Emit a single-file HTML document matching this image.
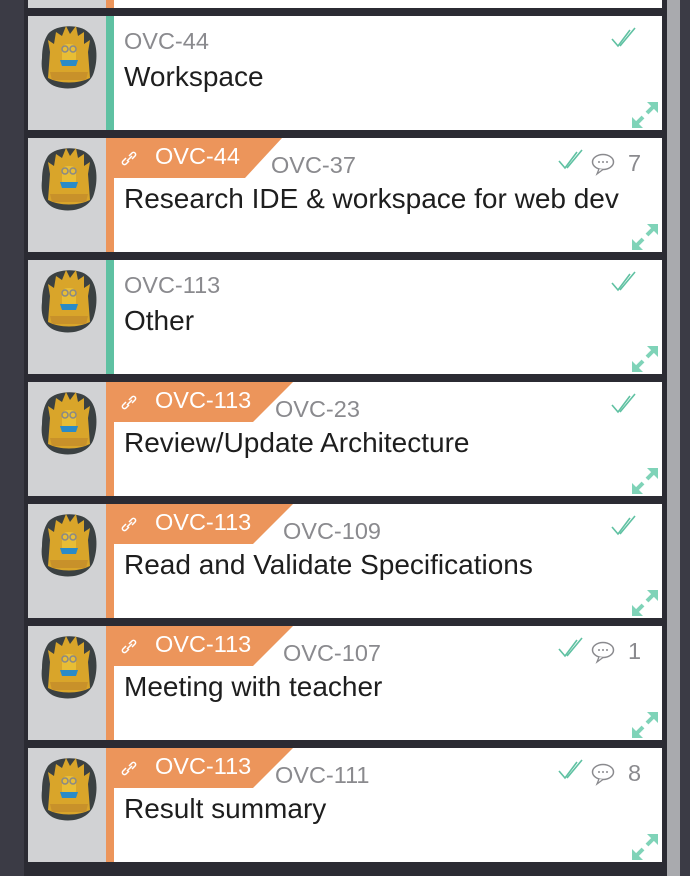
<!DOCTYPE html><html><head><style>
body{margin:0;width:690px;height:876px;background:#2b2b33;position:relative;overflow:hidden;font-family:"Liberation Sans",sans-serif}
.ls{position:absolute;left:0;top:0;width:24px;height:876px;background:#3b3b45}
.sb{position:absolute;left:667px;top:0;width:13px;height:876px;background:#a9aaae}
.rs{position:absolute;left:680px;top:0;width:10px;height:876px;background:#3b3b45}
.card{position:absolute;left:28px;width:634px;height:114px;background:#fff}
.av{position:absolute;left:0;top:0;width:78px;height:114px;background:#d1d2d4}
.bar{position:absolute;left:78px;top:0;width:8px;height:114px}
.g{background:#5fc1a2}.o{background:#ec955b}
.id{position:absolute;top:12px;font-size:23.5px;color:#8a8a8e}
.t{position:absolute;left:96px;top:45px;font-size:28px;color:#1e1e1e;white-space:nowrap}
.tag{position:absolute;left:78px;top:0;height:40px;background:#ec955b}
.tg{position:absolute;left:49px;top:5px;color:#fff;font-size:23.5px}
.ic{position:absolute}
</style></head><body>
<div class="ls"></div><div class="sb"></div><div class="rs"></div>
<div class="card" style="top:-106px"><div class="av"></div><div class="bar o"></div></div>
<svg width="0" height="0" style="position:absolute"><defs>
<g id="av"><path d="M12 12 C20 2 44 2 52 10 C62 18 62 38 58 50 C54 64 38 68 26 66 C10 64 4 52 6 36 C6 26 8 18 12 12Z" fill="#3b4142"/><path d="M12 56 L14 30 L12 18 L18 22 L20 10 L26 14 L30 4 L34 12 L40 4 L42 14 L48 10 L48 22 L54 18 L52 30 L54 56 C42 62 24 62 12 56Z" fill="#d9a52a"/><rect x="26" y="22" width="14" height="20" rx="5" fill="#e8bd35"/><circle cx="29" cy="27" r="3" fill="none" stroke="#888" stroke-width="1.5"/><circle cx="37" cy="27" r="3" fill="none" stroke="#888" stroke-width="1.5"/><path d="M24 38 L42 38 L40 44 L26 44Z" fill="#2a8bc7"/><path d="M14 50 L52 50 L50 58 L16 58Z" fill="#c8912a"/></g>
<g id="ex"><path d="M0 26 L0 15 L11 26Z M26 0 L15 0 L26 11Z" fill="#7fd3b8"/><path d="M5 21 L11 15 M15 11 L21 5" stroke="#7fd3b8" stroke-width="4" fill="none"/></g>
<g id="ck"><path d="M1 12 L7 19 L19 3 M9 19 L24 1" stroke="#5fc1a2" stroke-width="1.6" fill="none"/></g>
<g id="cm"><ellipse cx="12" cy="9" rx="10.5" ry="7.5" fill="none" stroke="#8a8a8e" stroke-width="1.5"/><path d="M8 16 L6 21 L12 16.5" fill="#fff" stroke="#8a8a8e" stroke-width="1.3"/><circle cx="8" cy="9" r="1" fill="#8a8a8e"/><circle cx="12" cy="9" r="1" fill="#8a8a8e"/><circle cx="16" cy="9" r="1" fill="#8a8a8e"/></g>
<g id="ln"><path d="M6 9 L3 12 A2 2 0 0 0 6 15 L9 12 M9 7 L12 4 A2 2 0 0 1 15 7 L12 10 M7 12 L12 7" stroke="#fff" stroke-width="1.5" fill="none"/></g>
</defs></svg>

<div class="card" style="top:16px"><div class="av"><svg width="70" height="72" style="position:absolute;left:8px;top:6px"><use href="#av"/></svg></div><div class="bar g"></div>
<div class="id" style="left:96px">OVC-44</div><div class="t">Workspace</div>
<svg class="ic" style="left:583px;top:11px" width="26" height="22"><use href="#ck"/></svg>
<svg class="ic" style="left:604px;top:86px" width="26" height="26"><use href="#ex"/></svg></div>

<div class="card" style="top:138px"><div class="av"><svg width="70" height="72" style="position:absolute;left:8px;top:6px"><use href="#av"/></svg></div><div class="bar o"></div>
<div class="tag" style="width:176px;clip-path:polygon(0 0,100% 0,139px 100%,0 100%)"><svg class="ic" style="left:14px;top:11px" width="18" height="18"><use href="#ln"/></svg><div class="tg">OVC-44</div></div>
<div class="id" style="left:243px;top:14px">OVC-37</div><div class="t">Research IDE &amp; workspace for web dev</div>
<svg class="ic" style="left:530px;top:11px" width="26" height="22"><use href="#ck"/></svg>
<svg class="ic" style="left:563px;top:15px" width="26" height="24"><use href="#cm"/></svg><div class="id" style="left:600px;top:12px">7</div>
<svg class="ic" style="left:604px;top:86px" width="26" height="26"><use href="#ex"/></svg></div>

<div class="card" style="top:260px"><div class="av"><svg width="70" height="72" style="position:absolute;left:8px;top:6px"><use href="#av"/></svg></div><div class="bar g"></div>
<div class="id" style="left:96px">OVC-113</div><div class="t">Other</div>
<svg class="ic" style="left:583px;top:11px" width="26" height="22"><use href="#ck"/></svg>
<svg class="ic" style="left:604px;top:86px" width="26" height="26"><use href="#ex"/></svg></div>

<div class="card" style="top:382px"><div class="av"><svg width="70" height="72" style="position:absolute;left:8px;top:6px"><use href="#av"/></svg></div><div class="bar o"></div>
<div class="tag" style="width:187px;clip-path:polygon(0 0,100% 0,147px 100%,0 100%)"><svg class="ic" style="left:14px;top:11px" width="18" height="18"><use href="#ln"/></svg><div class="tg">OVC-113</div></div>
<div class="id" style="left:247px;top:14px">OVC-23</div><div class="t">Review/Update Architecture</div>
<svg class="ic" style="left:583px;top:11px" width="26" height="22"><use href="#ck"/></svg>
<svg class="ic" style="left:604px;top:86px" width="26" height="26"><use href="#ex"/></svg></div>

<div class="card" style="top:504px"><div class="av"><svg width="70" height="72" style="position:absolute;left:8px;top:6px"><use href="#av"/></svg></div><div class="bar o"></div>
<div class="tag" style="width:187px;clip-path:polygon(0 0,100% 0,147px 100%,0 100%)"><svg class="ic" style="left:14px;top:11px" width="18" height="18"><use href="#ln"/></svg><div class="tg">OVC-113</div></div>
<div class="id" style="left:255px;top:14px">OVC-109</div><div class="t">Read and Validate Specifications</div>
<svg class="ic" style="left:583px;top:11px" width="26" height="22"><use href="#ck"/></svg>
<svg class="ic" style="left:604px;top:86px" width="26" height="26"><use href="#ex"/></svg></div>

<div class="card" style="top:626px"><div class="av"><svg width="70" height="72" style="position:absolute;left:8px;top:6px"><use href="#av"/></svg></div><div class="bar o"></div>
<div class="tag" style="width:187px;clip-path:polygon(0 0,100% 0,147px 100%,0 100%)"><svg class="ic" style="left:14px;top:11px" width="18" height="18"><use href="#ln"/></svg><div class="tg">OVC-113</div></div>
<div class="id" style="left:255px;top:14px">OVC-107</div><div class="t">Meeting with teacher</div>
<svg class="ic" style="left:530px;top:11px" width="26" height="22"><use href="#ck"/></svg>
<svg class="ic" style="left:563px;top:15px" width="26" height="24"><use href="#cm"/></svg><div class="id" style="left:600px;top:12px">1</div>
<svg class="ic" style="left:604px;top:86px" width="26" height="26"><use href="#ex"/></svg></div>

<div class="card" style="top:748px"><div class="av"><svg width="70" height="72" style="position:absolute;left:8px;top:6px"><use href="#av"/></svg></div><div class="bar o"></div>
<div class="tag" style="width:187px;clip-path:polygon(0 0,100% 0,147px 100%,0 100%)"><svg class="ic" style="left:14px;top:11px" width="18" height="18"><use href="#ln"/></svg><div class="tg">OVC-113</div></div>
<div class="id" style="left:247px;top:14px">OVC-111</div><div class="t">Result summary</div>
<svg class="ic" style="left:530px;top:11px" width="26" height="22"><use href="#ck"/></svg>
<svg class="ic" style="left:563px;top:15px" width="26" height="24"><use href="#cm"/></svg><div class="id" style="left:600px;top:12px">8</div>
<svg class="ic" style="left:604px;top:86px" width="26" height="26"><use href="#ex"/></svg></div>
</body></html>
